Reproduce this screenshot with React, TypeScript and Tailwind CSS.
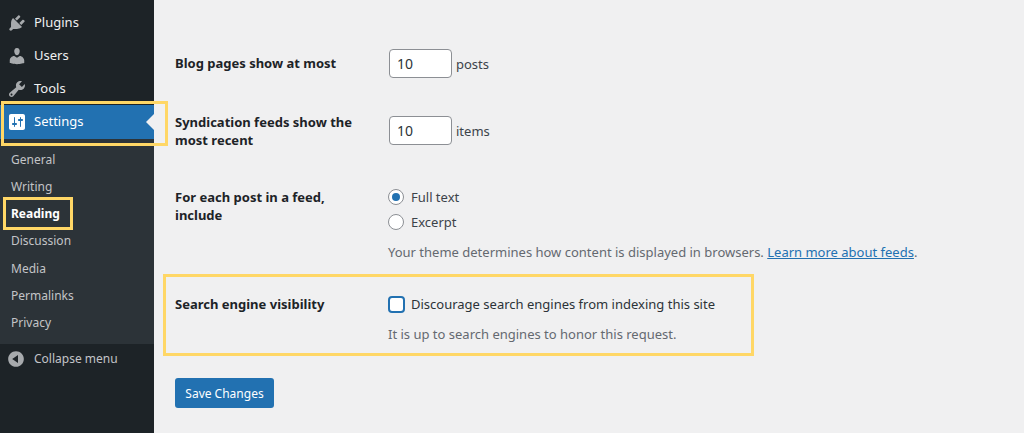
import React from 'react';

const ICONS = {
  plugins:
    'M13.11 4.36L9.87 7.6 8 5.73l3.24-3.24c.35-.34 1.05-.2 1.56.32.52.51.66 1.21.31 1.55zm-8 1.77l.91-1.12 9.01 9.01-1.19.84c-.71.71-2.63 1.16-3.82 1.16H6.14L4.9 17.26c-.59.59-1.54.59-2.12 0-.59-.58-.59-1.53 0-2.12l1.24-1.24v-3.88c0-1.13.4-3.19 1.09-3.89zm7.26 3.97l3.24-3.24c.34-.35 1.04-.21 1.55.31.52.51.66 1.21.31 1.55l-3.24 3.25z',
  users:
    'M10 9.25c-2.27 0-2.73-3.44-2.73-3.44C7 4.02 7.82 2 9.97 2c2.16 0 2.98 2.02 2.71 3.81 0 0-.41 3.44-2.68 3.44zm0 2.57L12.72 10c2.39 0 4.52 2.33 4.52 4.53v2.49s-3.65 1.13-7.24 1.13c-3.65 0-7.24-1.13-7.24-1.13v-2.49c0-2.25 1.94-4.48 4.47-4.48z',
  tools:
    'M16.68 9.77c-1.34 1.34-3.3 1.67-4.95.99l-5.41 6.52c-.99.99-2.59.99-3.58 0s-.99-2.59 0-3.57l6.52-5.42c-.68-1.65-.35-3.61.99-4.95 1.28-1.28 3.12-1.62 4.72-1.06l-2.89 2.89 2.82 2.82 2.86-2.87c.53 1.58.18 3.39-1.08 4.65zM3.81 16.21c.4.39 1.04.39 1.43 0 .4-.4.4-1.04 0-1.43-.39-.4-1.03-.4-1.43 0-.39.39-.39 1.03 0 1.43z',
  settings:
    'M18 16V4c0-1.1-.9-2-2-2H4c-1.1 0-2 .9-2 2v12c0 1.1.9 2 2 2h12c1.1 0 2-.9 2-2zM8 11h1c.55 0 1 .45 1 1s-.45 1-1 1H8v1.5c0 .28-.22.5-.5.5s-.5-.22-.5-.5V13H6c-.55 0-1-.45-1-1s.45-1 1-1h1V5.5c0-.28.22-.5.5-.5s.5.22.5.5V11zm5-2h-1c-.55 0-1-.45-1-1s.45-1 1-1h1V5.5c0-.28.22-.5.5-.5s.5.22.5.5V7h1c.55 0 1 .45 1 1s-.45 1-1 1h-1v5.5c0 .28-.22.5-.5.5s-.5-.22-.5-.5V9z',
  collapse:
    'M10 2.16c4.33 0 7.84 3.51 7.84 7.84s-3.51 7.84-7.84 7.84S2.16 14.33 2.16 10 5.71 2.16 10 2.16zm2 11.72V6.12L6.18 9.97z',
};

const Icon = ({ d, className }: { d: string; className: string }) => (
  <svg viewBox="0 0 20 20" className={className} fill="currentColor">
    <path d={d} />
  </svg>
);

const SUBMENU = ['General', 'Writing', 'Reading', 'Discussion', 'Media', 'Permalinks', 'Privacy'];

const Row = ({ label, className, children }: { label: React.ReactNode; className: string; children: React.ReactNode }) => (
  <div className={`flex ${className}`}>
    <div className="w-[214px] shrink-0 text-[13px] leading-[18px] font-bold text-[#1d2327]">{label}</div>
    <div className="flex-1 text-[13px] leading-[18px] text-[#3c434a]">{children}</div>
  </div>
);

const NumberBox = () => (
  <div className="w-[63px] h-[29px] bg-white border border-[#8c8f94] rounded-[4px] pl-[7px] flex items-center text-[#2c3338] text-[14px]">
    10
  </div>
);

const Highlight = ({ className }: { className: string }) => (
  <div className={`absolute border-[3px] border-[#ffd766] ${className}`} />
);

export default function App() {
  return (
    <div className="relative w-[1024px] h-[433px] overflow-hidden flex bg-[#f0f0f1] font-['Noto_Sans',sans-serif]">
      {/* Sidebar */}
      <aside className="w-[154px] shrink-0 bg-[#1d2327] flex flex-col text-[13px] text-[#f0f0f1]">
        <div className="h-[105px] pt-[6px] flex flex-col">
          {[
            { name: 'Plugins', d: ICONS.plugins },
            { name: 'Users', d: ICONS.users },
            { name: 'Tools', d: ICONS.tools },
          ].map((item) => (
            <div key={item.name} className="h-[33.3px] flex items-center">
              <Icon d={item.d} className="w-5 h-5 ml-[7px] mr-[7px] text-[#a7aaad]" />
              <span>{item.name}</span>
            </div>
          ))}
        </div>
        <div className="relative h-[34px] bg-[#2271b1] flex items-center text-white">
          <Icon d={ICONS.settings} className="w-5 h-5 ml-[7px] mr-[7px]" />
          <span>Settings</span>
          <div className="absolute right-0 top-[9px] border-y-[8px] border-y-transparent border-r-[8px] border-r-[#f0f0f1]" />
        </div>
        <div className="h-[205px] bg-[#2c3338] pt-[7.5px] flex flex-col text-[12px] text-[#c3c4c7]">
          {SUBMENU.map((name) => (
            <div
              key={name}
              className={`h-[27.15px] pl-[11px] flex items-center ${name === 'Reading' ? 'font-bold text-white' : ''}`}
            >
              {name}
            </div>
          ))}
        </div>
        <div className="h-[29px] pt-[1px] flex items-center text-[12px] text-[#c3c4c7]">
          <Icon d={ICONS.collapse} className="w-5 h-5 ml-[6px] mr-2 text-[#a7aaad]" />
          <span>Collapse menu</span>
        </div>
      </aside>

      {/* Settings form */}
      <main className="flex-1 pl-[21px] flex flex-col">
        <Row label={<span className="block -mt-[1px]">Blog pages show at most</span>} className="mt-[49px] h-[29px] items-center">
          <div className="flex items-center gap-[4px]">
            <NumberBox />
            <span>posts</span>
          </div>
        </Row>

        <Row
          label={
            <>
              Syndication feeds show the
              <br />
              most recent
            </>
          }
          className="mt-[35px] h-[38px]"
        >
          <div className="flex items-center gap-[4px] mt-[3px]">
            <NumberBox />
            <span>items</span>
          </div>
        </Row>

        <Row
          label={
            <>
              For each post in a feed,
              <br />
              include
            </>
          }
          className="mt-[37px] h-[75px] pt-0"
        >
          <div className="flex items-center gap-[7px] h-[18px] -ml-[1px]">
            <div className="w-4 h-4 rounded-full bg-white border border-[#8c8f94] flex items-center justify-center">
              <div className="w-2 h-2 rounded-full bg-[#2271b1]" />
            </div>
            <span>Full text</span>
          </div>
          <div className="flex items-center gap-[7px] h-[18px] mt-[7px] -ml-[1px]">
            <div className="w-4 h-4 rounded-full bg-white border border-[#8c8f94]" />
            <span>Excerpt</span>
          </div>
          <p className="mt-[12px] -ml-[1px] whitespace-nowrap text-[#646970]">
            Your theme determines how content is displayed in browsers.{' '}
            <a className="text-[#2271b1] underline">Learn more about feeds</a>.
          </p>
        </Row>

        <Row label="Search engine visibility" className="mt-[32px] h-[47px]">
          <div className="flex items-center gap-[6px] h-[18px] -ml-[1px]">
            <div className="w-[17px] h-[17px] bg-white rounded-[4px] border-2 border-[#2271b1]" />
            <span className="text-[#2c3338]">Discourage search engines from indexing this site</span>
          </div>
          <p className="mt-[12px] -ml-[1px] text-[#646970]">It is up to search engines to honor this request.</p>
        </Row>

        <button className="mt-[36px] w-[99px] h-[30px] pt-[2px] rounded-[3px] bg-[#2271b1] text-white text-[12px]">
          Save Changes
        </button>
      </main>

      {/* Yellow annotation boxes */}
      <Highlight className="left-[1px] top-[101px] w-[167px] h-[45px]" />
      <Highlight className="left-[3px] top-[197px] w-[70px] h-[33px]" />
      <Highlight className="left-[163px] top-[274px] w-[591px] h-[82px]" />
    </div>
  );
}
